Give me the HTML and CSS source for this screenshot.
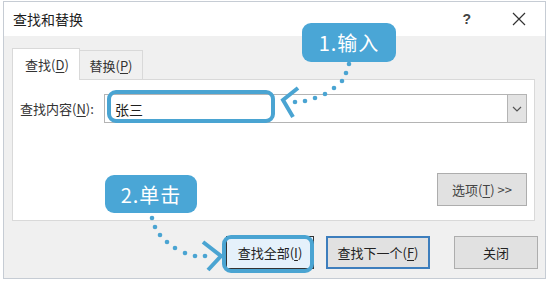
FILE: index.html
```html
<!DOCTYPE html>
<html>
<head>
    <meta charset="utf-8">
    <link rel="stylesheet" href="styles.css">
</head>
<body>

<div class="window">
    <div class="titlebar">
        <span class="title">查找和替换</span>
        <span class="help">?</span>
        <span class="close">
            <svg width="14" height="14" viewBox="0 0 14 14"><path d="M1 1 L13 13 M13 1 L1 13" stroke="#333" stroke-width="1.2" fill="none"/></svg>
        </span>
    </div>

    <div class="body">
        <div class="tabs">
            <div class="tab active">查找(<u>D</u>)</div>
            <div class="tab">替换(<u>P</u>)</div>
        </div>
        <div class="panel">
            <div class="field">
                <label class="label">查找内容(<u>N</u>):</label>
                <div class="combo">
                    <span class="combo_text">张三</span>
                    <span class="combo_btn">
                        <svg width="10" height="6" viewBox="0 0 10 6"><path d="M1 1 L5 5 L9 1" stroke="#555" stroke-width="1.2" fill="none"/></svg>
                    </span>
                </div>
            </div>
            <div class="panel_foot">
                <button class="btn options">选项(<u>T</u>) &gt;&gt;</button>
            </div>
        </div>
        <div class="actions">
            <button class="btn btn_find_all">查找全部(<u>I</u>)</button>
            <button class="btn btn_default">查找下一个(<u>F</u>)</button>
            <button class="btn btn_close">关闭</button>
        </div>
    </div>
</div>

<!-- annotations over the dialog -->
<div class="ring ring_input"></div>
<div class="ring ring_button"></div>
<div class="callout callout_1">1.输入</div>
<div class="callout callout_2">2.单击</div>

<svg class="arrows" width="554" height="285" viewBox="0 0 554 285">
    <g fill="#4aa4d2">
        <circle cx="349" cy="64" r="2.3"/>
        <circle cx="346" cy="73" r="2.3"/>
        <circle cx="342" cy="81" r="2.3"/>
        <circle cx="334" cy="88" r="2.3"/>
        <circle cx="325" cy="94" r="2.3"/>
        <circle cx="315" cy="98" r="2.3"/>
        <circle cx="305" cy="101" r="2.3"/>
        <circle cx="295" cy="102" r="2.3"/>

        <circle cx="152" cy="218" r="2.3"/>
        <circle cx="155" cy="227" r="2.3"/>
        <circle cx="160" cy="235" r="2.3"/>
        <circle cx="167" cy="242" r="2.3"/>
        <circle cx="175" cy="248" r="2.3"/>
        <circle cx="185" cy="253" r="2.3"/>
        <circle cx="195" cy="256" r="2.3"/>
        <circle cx="205" cy="256" r="2.3"/>
    </g>
    <g stroke="#4aa4d2" stroke-width="4" fill="none" stroke-linecap="butt">
        <path d="M298 88 L283 100 L293 117"/>
        <path d="M203 242 L221 256 L208 270"/>
    </g>
</svg>

</body>
</html>
```

FILE: styles.css
```css
body {
    margin: 0;
    background: #ffffff;
    font-family: "Noto Sans CJK SC", "Noto Sans", sans-serif;
    font-size: 13px;
    color: #1e1e1e;
    position: relative;
    width: 554px;
    height: 285px;
    overflow: hidden;
}

u {
    text-decoration: underline;
    text-underline-offset: 2px;
}

.window {
    margin: 1px 0 0 3px;
    width: 543px;
    height: 278px;
    box-sizing: border-box;
    border: 1px solid #c6ccd4;
    background: #f0f0f0;
    display: flex;
    flex-direction: column;
}

.titlebar {
    height: 34px;
    background: #ffffff;
    display: flex;
    align-items: center;
    padding-left: 9px;
    flex-shrink: 0;
}

.title {
    font-size: 14px;
    flex: 1;
}

.help {
    font-family: "Liberation Sans", sans-serif;
    font-weight: bold;
    font-size: 14px;
    color: #444;
    margin-right: 41px;
}

.close {
    display: flex;
    margin-right: 19px;
}

.body {
    padding: 12px 0 0 8px;
    flex: 1;
}

.tabs {
    display: flex;
    align-items: flex-end;
    height: 31px;
}

.tab {
    box-sizing: border-box;
    height: 29px;
    width: 63px;
    border: 1px solid #d9d9d9;
    border-bottom: none;
    border-left: none;
    background: #f0f0f0;
    display: flex;
    align-items: center;
    justify-content: center;
    color: #333;
}

.tab.active {
    height: 32px;
    width: 68px;
    background: #ffffff;
    border-left: 1px solid #d9d9d9;
    margin-bottom: -1px;
    position: relative;
    z-index: 1;
    padding-left: 2px;
}

.panel {
    box-sizing: border-box;
    width: 523px;
    height: 142px;
    background: #ffffff;
    border: 1px solid #d9d9d9;
    padding: 14px 7px 14px 7px;
    display: flex;
    flex-direction: column;
    justify-content: space-between;
}

.field {
    display: flex;
    align-items: center;
}

.label {
    width: 84px;
    color: #333;
}

.combo {
    flex: 1;
    height: 29px;
    box-sizing: border-box;
    border: 1px solid #b4b4b4;
    display: flex;
    align-items: center;
}

.combo_text {
    flex: 1;
    padding-left: 10px;
    font-size: 14px;
}

.combo_btn {
    width: 18px;
    height: 27px;
    background: #e3e3e3;
    border-left: 1px solid #b4b4b4;
    display: flex;
    align-items: center;
    justify-content: center;
}

.panel_foot {
    display: flex;
    justify-content: flex-end;
}

.btn {
    font-family: "Noto Sans CJK SC", "Noto Sans", sans-serif;
    font-size: 13px;
    color: #222;
    background: #e1e1e1;
    border: 1px solid #adadad;
    box-sizing: border-box;
    height: 33px;
    padding: 0;
}

.options {
    width: 90px;
    color: #444;
}

.actions {
    display: flex;
    margin-top: 15px;
    padding-left: 214px;
}

.btn_find_all {
    width: 88px;
    border: 1px solid #333;
    background: #e5f1fb;
}

.btn_default {
    width: 104px;
    margin-left: 12px;
    border: 2px solid #3d7ebd;
}

.btn_close {
    width: 84px;
    margin-left: 24px;
}

.ring {
    position: absolute;
    box-sizing: border-box;
    border: 4px solid #4aa4d2;
    border-radius: 9px;
}

.ring_input {
    left: 107px;
    top: 90px;
    width: 168px;
    height: 33px;
}

.ring_button {
    left: 222px;
    top: 235px;
    width: 92px;
    height: 38px;
}

.callout {
    position: absolute;
    background: #4aa6d6;
    color: #ffffff;
    border-radius: 9px;
    font-size: 20px;
    font-weight: 400;
    display: flex;
    align-items: center;
    justify-content: center;
    letter-spacing: 1px;
}

.callout_1 {
    left: 302px;
    top: 23px;
    width: 94px;
    height: 39px;
}

.callout_2 {
    left: 105px;
    top: 175px;
    width: 92px;
    height: 38px;
}

.arrows {
    position: absolute;
    left: 0;
    top: 0;
    pointer-events: none;
}
```
